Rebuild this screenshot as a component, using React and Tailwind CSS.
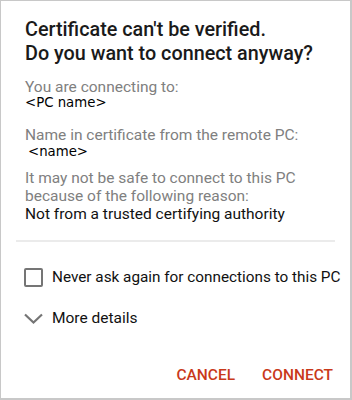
import React, { useState } from "react";

const CertificateDialog = () => {
  const [neverAsk, setNeverAsk] = useState(false);

  return (
    <div className="w-[352px] h-[400px] bg-white border border-[#c8c8c8] border-r-2 border-b-2 font-['Roboto',sans-serif] flex flex-col">
      <div className="pl-6 pr-4 pt-[17px]">
        <h2 className="text-[19.8px] leading-[24px] font-medium text-[#1a1a1a]">
          Certificate can't be verified.
          <br />
          Do you want to connect anyway?
        </h2>

        <div className="mt-[13px] text-[15.5px] leading-[16px]">
          <p className="text-[#808080]">You are connecting to:</p>
          <p className="text-black font-['DejaVu_Sans',sans-serif] text-[13.3px]">&lt;PC name&gt;</p>
        </div>

        <div className="mt-[15px] text-[15.5px] leading-[18px]">
          <p className="text-[#808080]">Name in certificate from the remote PC:</p>
          <p className="text-black font-['DejaVu_Sans',sans-serif] text-[13.3px] pl-[3px] leading-[16px]">&lt;name&gt;</p>
        </div>

        <div className="mt-[9px] text-[15.5px] leading-[18px]">
          <p className="text-[#808080]">
            It may not be safe to connect to this PC
            <br />
            because of the following reason:
          </p>
          <p className="text-[#111]">Not from a trusted certifying authority</p>
        </div>
      </div>

      <div className="mx-[15px] mt-[17px] h-[2px] bg-[#ebebeb]" />

      <label className="flex items-center gap-[9px] pl-[23px] mt-[25px] cursor-pointer">
        <span
          onClick={() => setNeverAsk(!neverAsk)}
          className="w-[19px] h-[19px] shrink-0 border-2 border-[#757575] rounded-[2px] flex items-center justify-center"
        >
          {neverAsk && <span className="w-[11px] h-[11px] bg-[#757575]" />}
        </span>
        <span className="text-[15.3px] leading-[20px] text-[#111] whitespace-nowrap">
          Never ask again for connections to this PC
        </span>
      </label>

      <button className="flex items-center gap-[9px] pl-[23px] mt-[21px] text-left">
        <svg width="19" height="11" viewBox="0 0 19 11" fill="none">
          <path d="M1 1.5 L9.5 9.5 L18 1.5" stroke="#757575" strokeWidth="2.2" />
        </svg>
        <span className="text-[15.5px] leading-[20px] text-[#111]">More details</span>
      </button>

      <div className="mt-auto mb-[13px] flex justify-end gap-[27px] pr-[17px]">
        <button className="text-[15.5px] leading-[20px] font-medium text-[#c9391a]">CANCEL</button>
        <button className="text-[15.5px] leading-[20px] font-medium text-[#c9391a]">CONNECT</button>
      </div>
    </div>
  );
};

export default function App() {
  return <CertificateDialog />;
}
